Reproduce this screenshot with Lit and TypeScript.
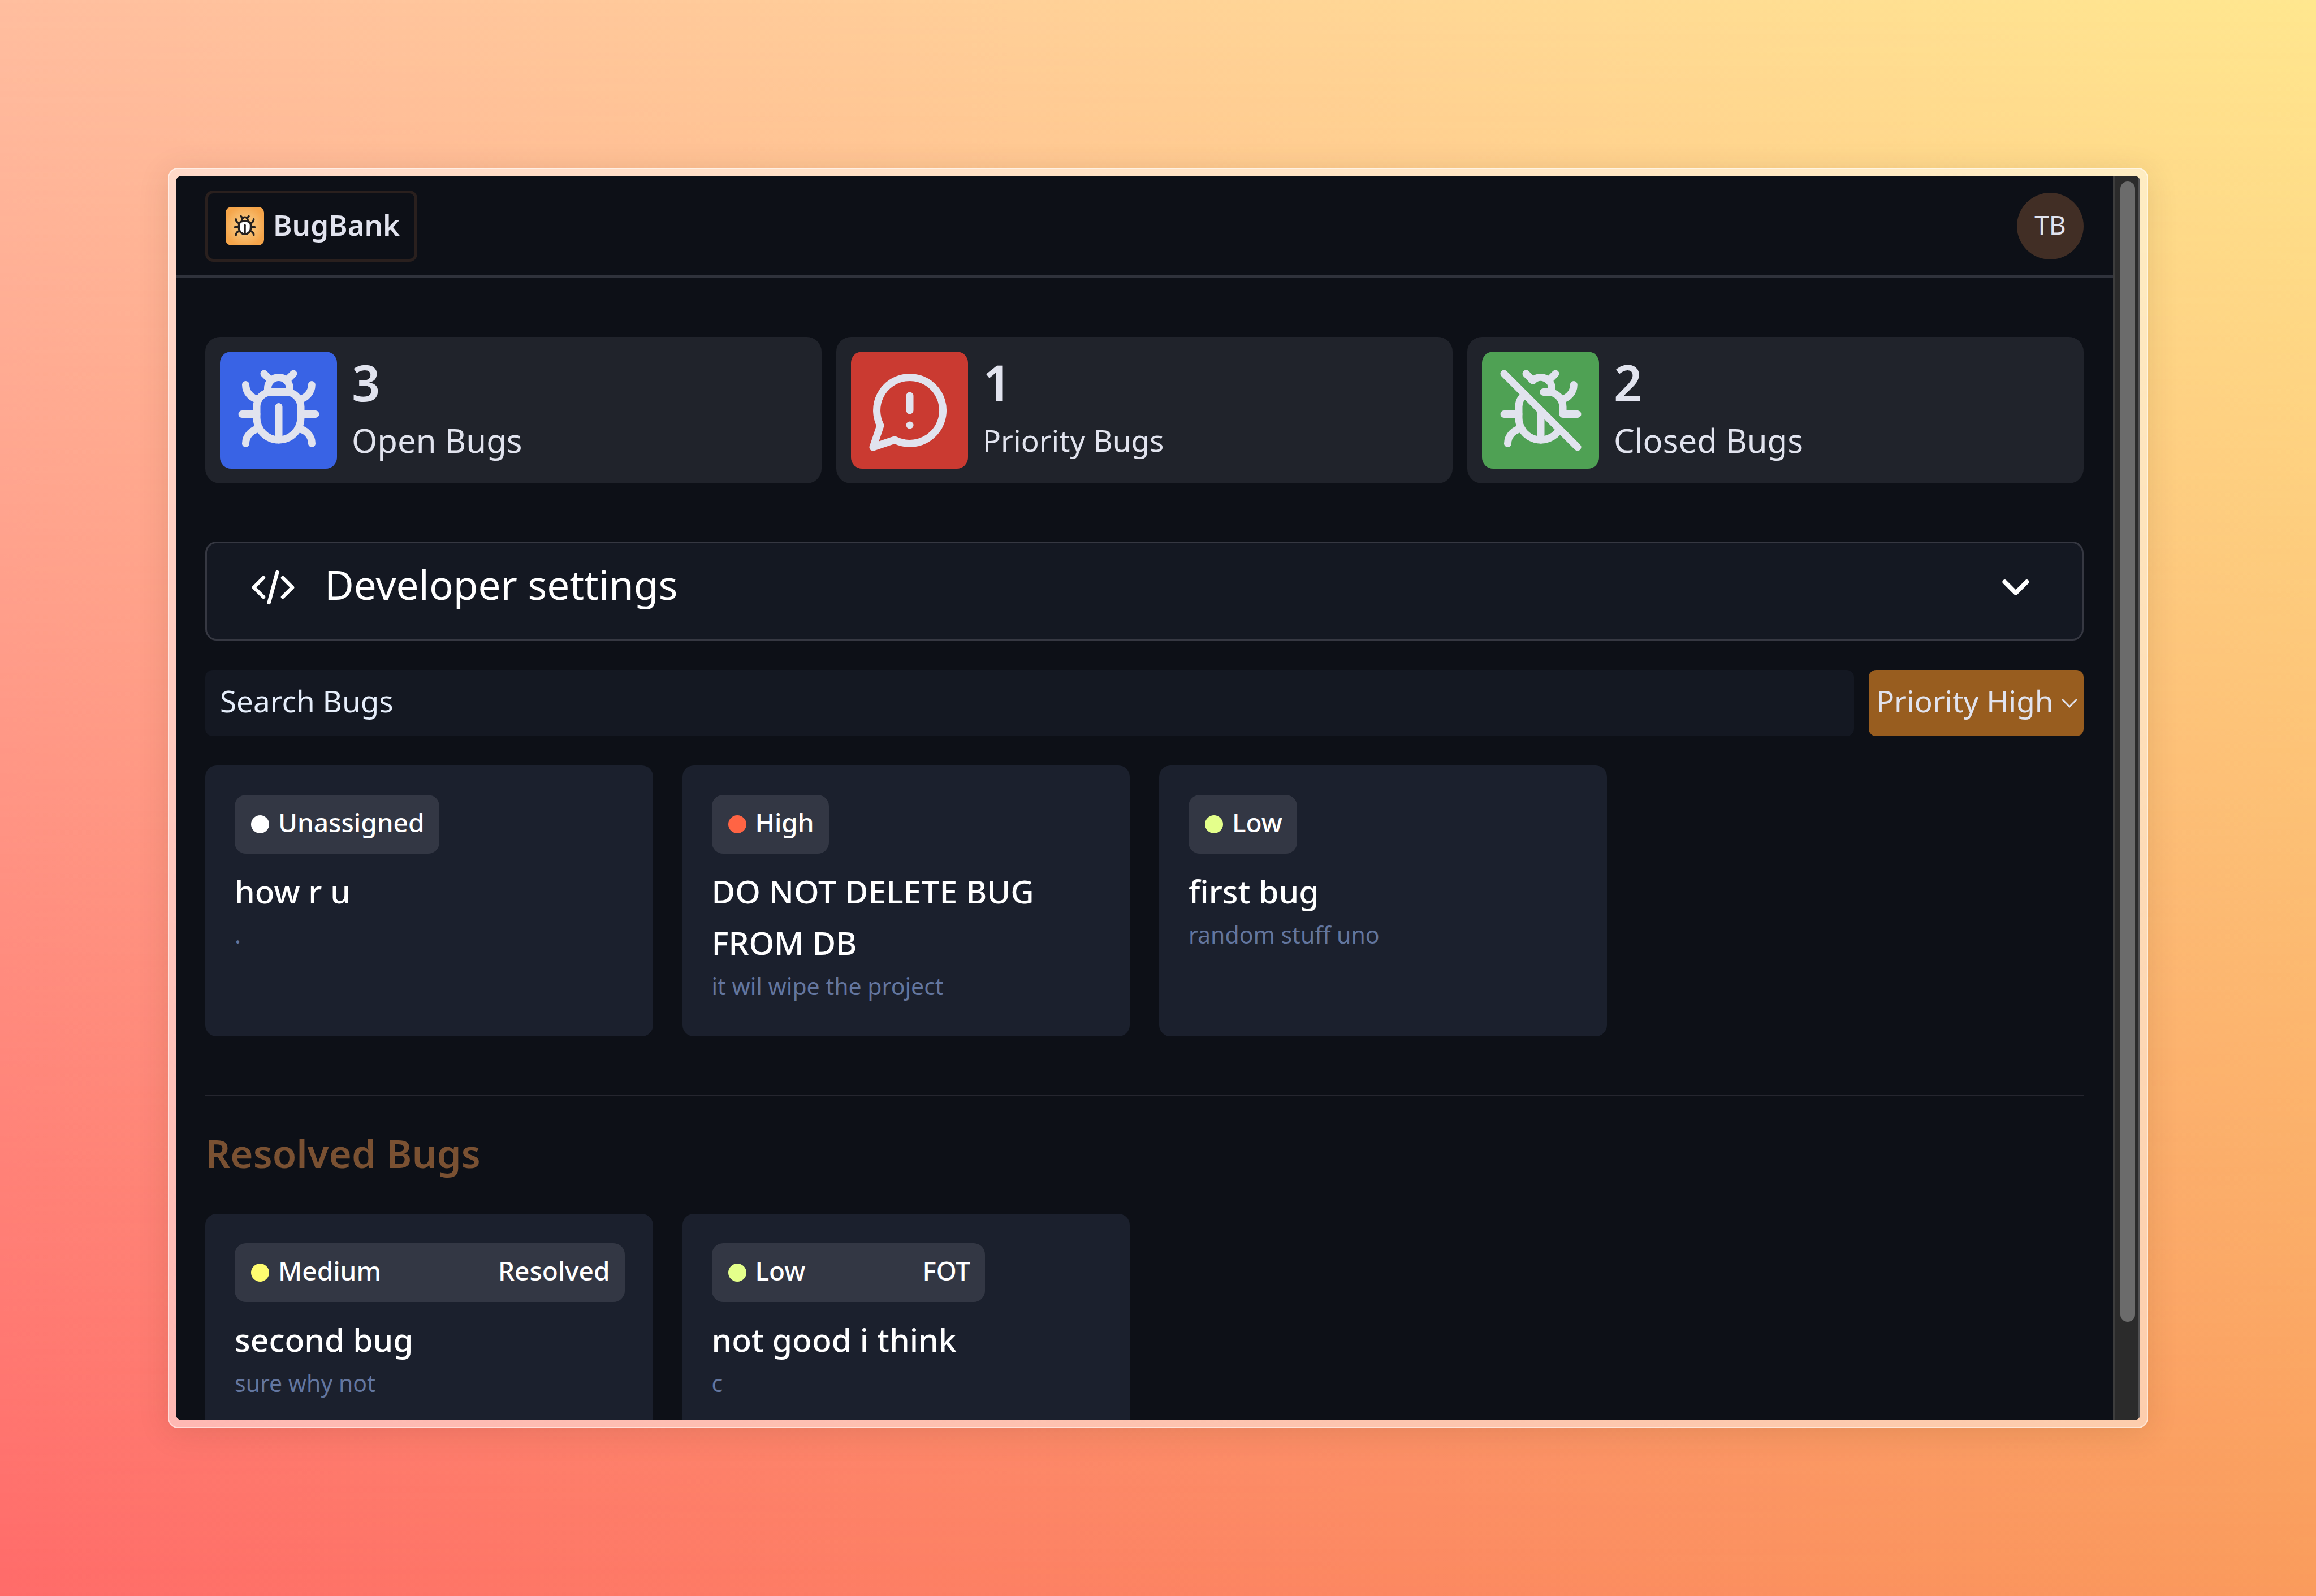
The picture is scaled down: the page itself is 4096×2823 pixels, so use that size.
import { LitElement, html, css, svg, nothing } from "lit";
import { customElement, property } from "lit/decorators.js";

const bugPaths = svg`
  <path d="m8 2 1.88 1.88" />
  <path d="M14.12 3.88 16 2" />
  <path d="M9 7.13v-1a3.003 3.003 0 1 1 6 0v1" />
  <path class="body" d="M12 20c-3.3 0-6-2.7-6-6v-3a4 4 0 0 1 4-4h4a4 4 0 0 1 4 4v3c0 3.3-2.7 6-6 6" />
  <path d="M12 20v-9" />
  <path d="M6.53 9C4.6 8.8 3 7.1 3 5" />
  <path d="M6 13H2" />
  <path d="M3 21c0-2.1 1.7-3.9 3.8-4" />
  <path d="M20.97 5c0 2.1-1.6 3.8-3.5 4" />
  <path d="M22 13h-4" />
  <path d="M17.2 17c2.1.1 3.8 1.9 3.8 4" />
`;

const warningPaths = svg`
  <path d="M7.9 20A9 9 0 1 0 4 16.1L2 22Z" />
  <path d="M12 8v4" />
  <path d="M12 16h.01" />
`;

const bugOffPaths = svg`
  <path d="M15 7.13V6a3 3 0 0 0-5.14-2.1L8 2" />
  <path d="M14.12 3.88 16 2" />
  <path d="M22 13h-4v-2a4 4 0 0 0-4-4h-1.3" />
  <path d="M20.97 5c0 2.1-1.6 3.8-3.5 4" />
  <path d="m2 2 20 20" />
  <path d="M7.7 7.7A4 4 0 0 0 6 11v3a6 6 0 0 0 11.13 3.13" />
  <path d="M12 20v-8" />
  <path d="M6 13H2" />
  <path d="M3 21c0-2.1 1.7-3.9 3.8-4" />
`;

type Priority = "Unassigned" | "High" | "Medium" | "Low";

interface Bug {
  priority: Priority;
  title: string;
  text: string;
  status?: string;
}

const openBugs: Bug[] = [
  { priority: "Unassigned", title: "how r u", text: "." },
  { priority: "High", title: "DO NOT DELETE BUG FROM DB", text: "it wil wipe the project" },
  { priority: "Low", title: "first bug", text: "random stuff uno" },
];

const resolvedBugs: Bug[] = [
  { priority: "Medium", title: "second bug", text: "sure why not", status: "Resolved" },
  { priority: "Low", title: "not good i think", text: "c", status: "FOT" },
];

@customElement("stat-card")
export class StatCard extends LitElement {
  @property() kind: "open" | "priority" | "closed" = "open";
  @property() count = "";
  @property() label = "";

  static styles = css`
    :host {
      display: flex;
      gap: 26px;
      padding: 26px;
      border-radius: 26px;
      background: #20232b;
      color: #e1e3ee;
    }
    .tile {
      display: grid;
      place-items: center;
      flex: none;
      width: 207px;
      height: 207px;
      border-radius: 20px;
    }
    .open { background: #3963e5; }
    .priority { background: #ca3a31; }
    .closed { background: #4fa154; }
    svg {
      width: 156px;
      height: 156px;
      fill: none;
      stroke: currentColor;
      stroke-width: 2;
      stroke-linecap: round;
      stroke-linejoin: round;
    }
    .figures {
      display: grid;
      grid-template-rows: 1fr 1fr;
      align-items: center;
      padding-top: 4px;
    }
    .count {
      font-size: 88px;
      line-height: 101px;
      font-weight: 600;
    }
    .label {
      font-size: 58px;
      line-height: 101px;
    }
    .label.small { font-size: 53px; }
  `;

  render() {
    const paths =
      this.kind === "open" ? bugPaths : this.kind === "priority" ? warningPaths : bugOffPaths;
    return html`
      <div class="tile ${this.kind}">
        <svg viewBox="0 0 24 24" aria-hidden="true">${paths}</svg>
      </div>
      <div class="figures">
        <div class="count">${this.count}</div>
        <div class="label ${this.kind === "priority" ? "small" : ""}">${this.label}</div>
      </div>
    `;
  }
}

@customElement("bug-card")
export class BugCard extends LitElement {
  @property({ attribute: false }) bug!: Bug;

  static styles = css`
    :host {
      display: block;
      box-sizing: border-box;
      min-width: 0;
      padding: 52px 52px 58px;
      border-radius: 20px;
      background: #1b202d;
      color: #fff;
    }
    .badge {
      display: flex;
      align-items: center;
      box-sizing: border-box;
      width: max-content;
      height: 104px;
      padding: 0 26px 0 29px;
      border-radius: 20px;
      background: #333744;
      font-size: 46px;
      font-weight: 500;
      line-height: 62px;
      white-space: nowrap;
    }
    .dot {
      width: 32px;
      height: 32px;
      margin-right: 16px;
      border-radius: 50%;
    }
    .unassigned { background: #fff; }
    .high { background: #ff6444; }
    .medium { background: #fffc70; }
    .low { background: #e4ff8b; }
    .name, .status { padding-bottom: 8px; }
    .status { margin-left: 207px; }
    .title {
      margin: 21px 0 0;
      font-size: 57px;
      line-height: 91px;
      font-weight: 500;
    }
    .text {
      margin: 0;
      font-size: 41px;
      line-height: 62px;
      color: #63769f;
    }
  `;

  render() {
    const { priority, title, text, status } = this.bug;
    return html`
      <div class="badge">
        <span class="dot ${priority.toLowerCase()}"></span>
        <span class="name">${priority}</span>
        ${status ? html`<span class="status">${status}</span>` : nothing}
      </div>
      <h3 class="title">${title}</h3>
      <p class="text">${text}</p>
    `;
  }
}

@customElement("app-root")
export class AppRoot extends LitElement {
  static styles = css`
    :host {
      display: grid;
      position: relative;
      box-sizing: border-box;
      height: 100vh;
      padding: 297px;
      overflow: hidden;
      isolation: isolate;
      background: linear-gradient(90deg, #ffbe9f, #ffe78f);
      font-family: "Noto Sans", "Open Sans", sans-serif;
      color: #e1e3ee;
    }
    :host::before {
      content: "";
      position: absolute;
      inset: 0;
      z-index: -1;
      background: linear-gradient(90deg, #ff6b69, #fa9b5c);
      mask-image: linear-gradient(transparent, #000);
    }
    .frame {
      display: grid;
      min-height: 0;
      min-width: 0;
      padding: 12px;
      border: 2px solid rgba(255, 255, 255, 0.75);
      border-radius: 18px;
      background: rgba(255, 255, 255, 0.48);
      background-clip: padding-box;
      box-shadow: 0 8px 56px rgba(60, 40, 0, 0.12);
    }
    .window {
      display: grid;
      grid-template-columns: minmax(0, 1fr) 48px;
      min-height: 0;
      overflow: hidden;
      border-radius: 10px;
      background: #0d1017;
    }
    .page {
      min-height: 0;
      overflow: hidden;
    }
    .scrollbar {
      box-sizing: border-box;
      padding: 10px 6px 10px 10px;
      border-left: 3px solid #3d3d3d;
      border-right: 3px solid #505052;
      background: #2b2b2b;
    }
    .thumb {
      height: 92.5%;
      border-radius: 13px;
      background: #6b6b6b;
    }
    .nav {
      display: flex;
      align-items: center;
      justify-content: space-between;
      padding: 26px 52px 24px;
      border-bottom: 5px solid #2f323b;
    }
    .brand {
      display: flex;
      align-items: center;
      gap: 16px;
      box-sizing: border-box;
      height: 126px;
      padding: 0 26px 0 31px;
      border: 5px solid #2a201e;
      border-radius: 14px;
      color: inherit;
      font-size: 51px;
      font-weight: 600;
      text-decoration: none;
    }
    .brand-name { padding-bottom: 6px; }
    .logo {
      display: grid;
      place-items: center;
      width: 68px;
      height: 68px;
      border-radius: 10px;
      background: radial-gradient(circle, #f9cf8a 10%, #f5a54a 75%);
    }
    .logo svg {
      width: 42px;
      height: 42px;
      fill: none;
      stroke: #26221f;
      stroke-width: 2;
      stroke-linecap: round;
      stroke-linejoin: round;
    }
    .logo .body { fill: #fff; }
    .avatar {
      width: 118px;
      height: 118px;
      padding: 0 0 6px;
      border: 0;
      border-radius: 50%;
      background: #412e25;
      color: inherit;
      font: 46px "Noto Sans", sans-serif;
    }
    .main { padding: 104px 52px 52px; }
    .stats {
      display: grid;
      grid-template-columns: repeat(3, minmax(0, 1fr));
      gap: 26px;
    }
    .settings {
      display: flex;
      align-items: center;
      gap: 52px;
      box-sizing: border-box;
      width: 100%;
      margin: 103px 0 52px;
      padding: 26px 78px 39px;
      border: 3px solid #363842;
      border-radius: 20px;
      background: #141822;
      color: #fff;
      font: 71px / 94px "Noto Sans", sans-serif;
      text-align: left;
    }
    .settings svg {
      flex: none;
      width: 78px;
      height: 78px;
      fill: none;
      stroke: currentColor;
      stroke-linecap: round;
      stroke-linejoin: round;
    }
    .code { stroke-width: 2; }
    .chevron { stroke-width: 2.5; }
    .settings-label {
      flex: 1;
      padding-bottom: 10px;
    }
    .filters {
      display: flex;
      gap: 26px;
      height: 117px;
      margin-bottom: 52px;
    }
    .search, .sort {
      box-sizing: border-box;
      height: 100%;
      border: 0;
      border-radius: 13px;
      font: 53px "Noto Sans", sans-serif;
    }
    .search {
      flex: 1;
      min-width: 0;
      padding: 0 26px 8px;
      background: #141822;
      color: #e6eefb;
    }
    .search::placeholder {
      color: #e6eefb;
      opacity: 1;
    }
    .picker {
      display: grid;
      grid-template-columns: 380px;
      align-items: center;
    }
    .picker > * { grid-area: 1 / 1; }
    .sort {
      appearance: none;
      width: 100%;
      padding: 0 48px 8px 13px;
      background: #985d1f;
      color: #e1e3ee;
    }
    .sort-arrow {
      justify-self: end;
      width: 28px;
      height: 18px;
      margin-right: 11px;
      fill: none;
      stroke: #e1e3ee;
      stroke-width: 3;
      pointer-events: none;
    }
    .bugs {
      display: grid;
      grid-template-columns: repeat(4, minmax(0, 1fr));
      gap: 52px;
    }
    .rule {
      height: 3px;
      margin: 103px 0 52px;
      border: 0;
      background: #25262f;
    }
    .heading {
      margin: 0 0 60px;
      color: #7a5132;
      font-size: 69px;
      line-height: 96px;
      font-weight: 600;
    }
  `;

  render() {
    return html`
      <div class="frame">
        <div class="window">
          <div class="page">
            <header class="nav">
              <a class="brand" href="#">
                <span class="logo">
                  <svg viewBox="0 0 24 24" aria-hidden="true">${bugPaths}</svg>
                </span>
                <span class="brand-name">BugBank</span>
              </a>
              <button class="avatar" type="button">TB</button>
            </header>
            <main class="main">
              <section class="stats">
                <stat-card kind="open" count="3" label="Open Bugs"></stat-card>
                <stat-card kind="priority" count="1" label="Priority Bugs"></stat-card>
                <stat-card kind="closed" count="2" label="Closed Bugs"></stat-card>
              </section>
              <button class="settings" type="button" aria-expanded="false">
                <svg class="code" viewBox="0 0 24 24" aria-hidden="true">
                  <path d="M17.25 6.75 22.5 12l-5.25 5.25m-10.5 0L1.5 12l5.25-5.25m7.5-3-4.5 16.5" />
                </svg>
                <span class="settings-label">Developer settings</span>
                <svg class="chevron" viewBox="0 0 24 24" aria-hidden="true">
                  <path d="m6 9 6 6 6-6" />
                </svg>
              </button>
              <div class="filters">
                <input class="search" type="search" placeholder="Search Bugs" aria-label="Search Bugs" />
                <div class="picker">
                  <select class="sort" aria-label="Priority">
                    <option>Priority High</option>
                  </select>
                  <svg class="sort-arrow" viewBox="0 0 28 18" aria-hidden="true">
                    <path d="m1 2 13 13L27 2" />
                  </svg>
                </div>
              </div>
              <section class="bugs">
                ${openBugs.map((bug) => html`<bug-card .bug=${bug}></bug-card>`)}
              </section>
              <hr class="rule" />
              <h2 class="heading">Resolved Bugs</h2>
              <section class="bugs">
                ${resolvedBugs.map((bug) => html`<bug-card .bug=${bug}></bug-card>`)}
              </section>
            </main>
          </div>
          <div class="scrollbar"><div class="thumb"></div></div>
        </div>
      </div>
    `;
  }
}
